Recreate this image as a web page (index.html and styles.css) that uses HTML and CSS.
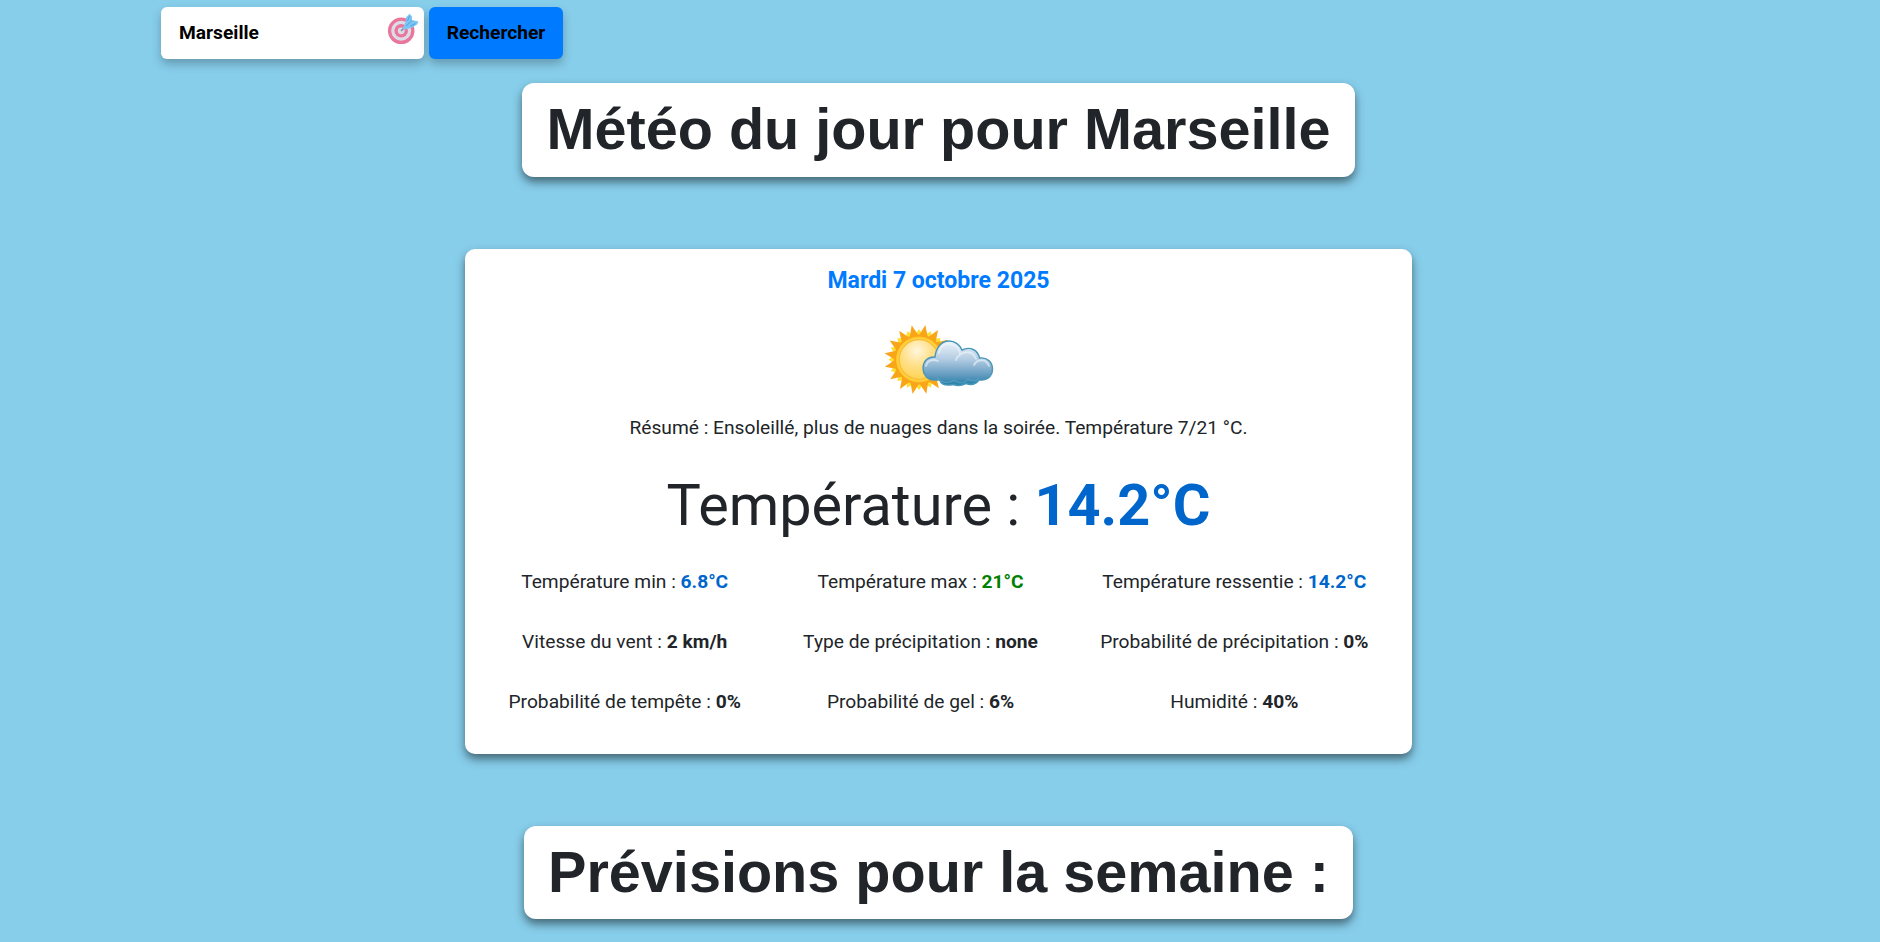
FILE: index.html
```
<!DOCTYPE html>
<html lang="fr">
<head>
<meta charset="utf-8">
<title>Météo</title>
<link rel="stylesheet" href="styles.css">
</head>
<body>
<form class="search">
  <div class="field">
    <span class="city">Marseille</span>
    <svg class="target" viewBox="0 0 32 32">
      <circle cx="14.200" cy="17.800" r="13.300" fill="#e9779b"/>
      <circle cx="14.200" cy="17.800" r="10" fill="#dedbe8"/>
      <circle cx="14.200" cy="17.800" r="6.800" fill="#e9779b"/>
      <circle cx="14.200" cy="17.800" r="3.400" fill="#dedbe8"/>
      <path d="M14 18 22 10" stroke="#7b8fa8" stroke-width="1.600"/>
      <path d="M15.500 15.500 18.500 9.500 19 4.500 22.500 .8 25 3.500 25 7 31.500 8.500 30 11.500 25.500 14.500 18.500 16.500Z" fill="#7cc4f2"/>
      <path d="M19 13 25 7.500M20.500 8l2-5M23.500 13l5-2.500" stroke="#4fa3e4" stroke-width="1" fill="none"/>
    </svg>
  </div>
  <button class="submit" type="button">Rechercher</button>
</form>
<main class="page">
  <h1 class="title">Météo du jour pour Marseille</h1>
  <section class="card">
    <h2 class="date">Mardi 7 octobre 2025</h2>
    <svg class="weather" viewBox="0 0 110 72">
      <defs>
        <radialGradient id="sun" cx=".45" cy=".28" r=".75"><stop offset="0" stop-color="#fff6dc"/><stop offset=".5" stop-color="#ffe08a"/><stop offset="1" stop-color="#ffd24d"/></radialGradient>
        <linearGradient id="cloud" x1="0" y1="0" x2="0" y2="1"><stop offset="0" stop-color="#eef4fb"/><stop offset=".4" stop-color="#b5cde3"/><stop offset=".8" stop-color="#5b97bd"/><stop offset="1" stop-color="#1f7fa8"/></linearGradient>
      </defs>
      <g fill="#ffdf2e">
        <g id="minor">
          <path id="m" d="M30 12 35 5 40 12Z"/>
          <use href="#m" transform="rotate(22.500 35 35.500)"/><use href="#m" transform="rotate(45 35 35.500)"/><use href="#m" transform="rotate(67.500 35 35.500)"/>
        </g>
        <use href="#minor" transform="rotate(90 35 35.500)"/><use href="#minor" transform="rotate(180 35 35.500)"/><use href="#minor" transform="rotate(270 35 35.500)"/>
      </g>
      <g fill="#f9a51a" transform="rotate(11.250 35 35.500)">
        <circle cx="35" cy="35.500" r="25"/>
        <g id="major">
          <path id="ray" d="M30 12.500 34.500 .5 39.500 12.500Z"/>
          <use href="#ray" transform="rotate(22.500 35 35.500)"/><use href="#ray" transform="rotate(45 35 35.500)"/><use href="#ray" transform="rotate(67.500 35 35.500)"/>
        </g>
        <use href="#major" transform="rotate(90 35 35.500)"/><use href="#major" transform="rotate(180 35 35.500)"/><use href="#major" transform="rotate(270 35 35.500)"/>
      </g>
      <circle cx="35" cy="35.500" r="22.500" fill="#ffd23a" stroke="#ffc62b"/>
      <circle cx="35" cy="35.500" r="19.800" fill="url(#sun)" stroke="#f8bd3c" stroke-width="1.200"/>
      <path d="M50 56C43 56 39 50 39 44.500 39 37 44 32.500 51 33 52 23 58 17 65 17 71 17 76 21 78 26 86 22 94 26 95.500 34 103 33 108.500 38 108.500 45 108.500 53 102 57 95 56 92 60 87 61.500 82 59.500 77 62 72 61.500 69.500 60.500 62 62 57 60 55.500 56Z" fill="url(#cloud)" stroke="#4996b7" stroke-width="1.400"/>
      <g fill="none" stroke="#eff6fc" stroke-linecap="round" stroke-width="1.800" opacity=".6"><path d="M42 42C43 37 48 34.500 54 37M55 29C56 22 61 19 66 20 72 20 76 25 76 31M72 36C75 28 88 24 92 35M90 41C93 35 102 34 105 42"/></g>
      <path d="M53 54C57 59 65 60 70 56 75 60 81 60 84 55 88 58 93 57 95 54" fill="none" stroke="#79b4cf" stroke-width="1" opacity=".5"/>
    </svg>
    <p class="summary">Résumé : Ensoleillé, plus de nuages dans la soirée. Température 7/21 °C.</p>
    <p class="temp">Température : <b class="cool">14.2°C</b></p>
    <div class="details">
      <p>Température min : <b class="cool">6.8°C</b></p>
      <p>Température max : <b class="mild">21°C</b></p>
      <p>Température ressentie : <b class="cool">14.2°C</b></p>
      <p>Vitesse du vent : <b>2 km/h</b></p>
      <p>Type de précipitation : <b>none</b></p>
      <p>Probabilité de précipitation : <b>0%</b></p>
      <p>Probabilité de tempête : <b>0%</b></p>
      <p>Probabilité de gel : <b>6%</b></p>
      <p>Humidité : <b>40%</b></p>
    </div>
  </section>
  <h1 class="title week">Prévisions pour la semaine :</h1>
</main>
</body>
</html>
```
FILE: styles.css
```
* { box-sizing: border-box; }
html { overflow: hidden; }
body {
  margin: 0;
  height: 942px;
  overflow: hidden;
  background: #87ceeb;
  color: #212529;
  font: 19.2px/28.8px Roboto, sans-serif;
}
p, h1, h2 { margin: 0; }
.search {
  display: flex;
  gap: 5px;
  padding: 7px 0 0 161px;
}
.field, .submit {
  height: 52px;
  border-radius: 6px;
  box-shadow: 0 5px 10px rgba(0, 0, 0, .25);
  font: 700 19.2px/52px Roboto, sans-serif;
  color: #000;
}
.field {
  display: flex;
  justify-content: space-between;
  width: 263px;
  padding: 0 5px 0 18px;
  background: #fff;
}
.target { width: 32px; height: 32px; margin-top: 6px; }
.submit {
  width: 134px;
  padding: 0;
  border: 0;
  background: #007bff;
}
.page {
  display: flex;
  flex-direction: column;
  align-items: center;
  width: 1877px;
  padding-top: 24px;
}
.title {
  height: 94px;
  padding: 12px 24px;
  border-radius: 12px;
  background: #fff;
  box-shadow: 0 5px 10px rgba(0, 0, 0, .5);
  font: 700 57.6px/69px "Liberation Sans", Arial, sans-serif;
  white-space: nowrap;
}
.week { height: 93px; }
.card {
  display: flex;
  flex-direction: column;
  align-items: center;
  width: 947px;
  height: 505px;
  margin: 72px 0;
  padding: 17px 43.5px 0;
  border-radius: 10px;
  background: #fff;
  box-shadow: 0 5px 10px rgba(0, 0, 0, .5);
}
.date { color: #007bff; font-size: 23.04px; line-height: 29px; }
.weather { width: 110px; height: 72px; margin-top: 29px; }
.summary { margin-top: 18px; }
.temp { margin-top: 28px; font-size: 57.6px; line-height: 70px; }
.details {
  display: grid;
  grid-template-columns: repeat(3, auto);
  justify-content: space-between;
  row-gap: 31.2px;
  width: 100%;
  margin-top: 27px;
  text-align: center;
  white-space: nowrap;
}
.cool { color: #0066cc; }
.mild { color: #008000; }
```
